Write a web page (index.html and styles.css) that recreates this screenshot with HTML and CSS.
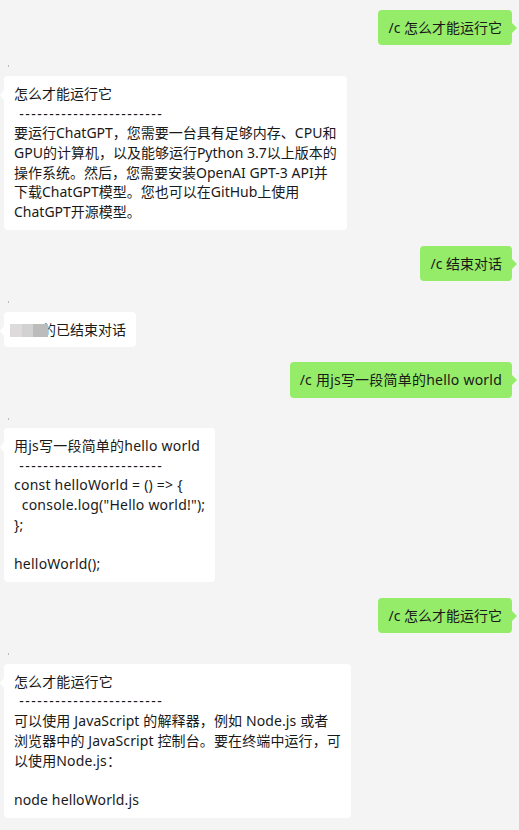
FILE: index.html
```html
<!DOCTYPE html>
<html lang="zh-CN">
<head>
<meta charset="utf-8">
<title>Chat</title>
<link rel="stylesheet" href="styles.css">
</head>
<body>
<div class="chat">
  <div class="row right">
    <div class="bubble green">/c 怎么才能运行它</div>
  </div>

  <div class="row left">
    <div class="name"><i class="dot"></i></div>
    <div class="bubble white"><span class="line">怎么才能运行它</span><span class="line dashes"> ------------------------</span><span class="line">要运行ChatGPT，您需要一台具有足够内存、CPU和</span><span class="line">GPU的计算机，以及能够运行Python 3.7以上版本的</span><span class="line">操作系统。然后，您需要安装OpenAI GPT-3 API并</span><span class="line">下载ChatGPT模型。您也可以在GitHub上使用</span><span class="line">ChatGPT开源模型。</span></div>
  </div>

  <div class="row right">
    <div class="bubble green">/c 结束对话</div>
  </div>

  <div class="row left">
    <div class="name"><i class="dot"></i></div>
    <div class="bubble white"><span class="mosaic"><i class="m1"></i><i class="m2"></i><i class="m3"></i></span><span class="line"><span class="spacer"></span>的已结束对话</span></div>
  </div>

  <div class="row right tight">
    <div class="bubble green latin">/c 用js写一段简单的hello world</div>
  </div>

  <div class="row left">
    <div class="name"><i class="dot"></i></div>
    <div class="bubble white latin"><span class="line">用js写一段简单的hello world</span><span class="line dashes"> ------------------------</span><span class="line">const helloWorld = () =&gt; {</span><span class="line">  console.log("Hello world!");</span><span class="line">};</span><span class="line">&nbsp;</span><span class="line">helloWorld();</span></div>
  </div>

  <div class="row right">
    <div class="bubble green">/c 怎么才能运行它</div>
  </div>

  <div class="row left">
    <div class="name"><i class="dot"></i></div>
    <div class="bubble white mixed"><span class="line">怎么才能运行它</span><span class="line dashes"> ------------------------</span><span class="line">可以使用 JavaScript 的解释器，例如 Node.js 或者</span><span class="line">浏览器中的 JavaScript 控制台。要在终端中运行，可</span><span class="line">以使用Node.js：</span><span class="line">&nbsp;</span><span class="line">node helloWorld.js</span></div>
  </div>
</div>
</body>
</html>
```

FILE: styles.css
```css
html, body {
  margin: 0;
  padding: 0;
  background: #f4f4f4;
}

body {
  font-family: "Noto Sans", "Noto Sans CJK SC", sans-serif;
  font-size: 14px;
  color: #191919;
}

.chat {
  display: flex;
  flex-direction: column;
  padding: 10px 7px 20px 4px;
}

.row {
  display: flex;
  flex-direction: column;
}

.row.right {
  align-items: flex-end;
  margin-top: 16px;
}

.row.right:first-child {
  margin-top: 0;
}

.row.right.tight {
  margin-top: 15px;
}

.row.left {
  align-items: flex-start;
  margin-top: 20px;
}

.name {
  height: 10.5px;
  width: 10px;
}

.dot {
  display: block;
  width: 1px;
  height: 2px;
  margin-left: 4px;
  background: #c8b4c8;
}

.bubble {
  position: relative;
  border-radius: 4px;
  padding: 8px 10px;
  line-height: 19.7px;
  white-space: pre;
}

.bubble .line {
  display: block;
}

.bubble .dashes {
  letter-spacing: 1.5px;
}

.latin {
  letter-spacing: 0.22px;
}

.mixed {
  letter-spacing: 0.12px;
}

.green {
  background: #95ec69;
  padding: 7.8px 10px;
}

.green::after {
  content: "";
  position: absolute;
  right: -5px;
  top: 13px;
  border-top: 5px solid transparent;
  border-bottom: 5px solid transparent;
  border-left: 5px solid #95ec69;
}

.white {
  background: #ffffff;
}

.white::before {
  content: "";
  position: absolute;
  left: -4px;
  top: 14px;
  border-top: 5px solid transparent;
  border-bottom: 5px solid transparent;
  border-right: 4px solid #ffffff;
}

.spacer {
  display: inline-block;
  width: 28px;
}

.mosaic {
  position: absolute;
  left: 6px;
  top: 12px;
  display: flex;
  height: 13px;
  z-index: 1;
}

.mosaic i {
  display: block;
  height: 13px;
}

.mosaic .m1 { width: 12px; background: #dcdadb; }
.mosaic .m2 { width: 11px; background: #d2d2d2; }
.mosaic .m3 { width: 15px; background: #bcbcbc; }
```
